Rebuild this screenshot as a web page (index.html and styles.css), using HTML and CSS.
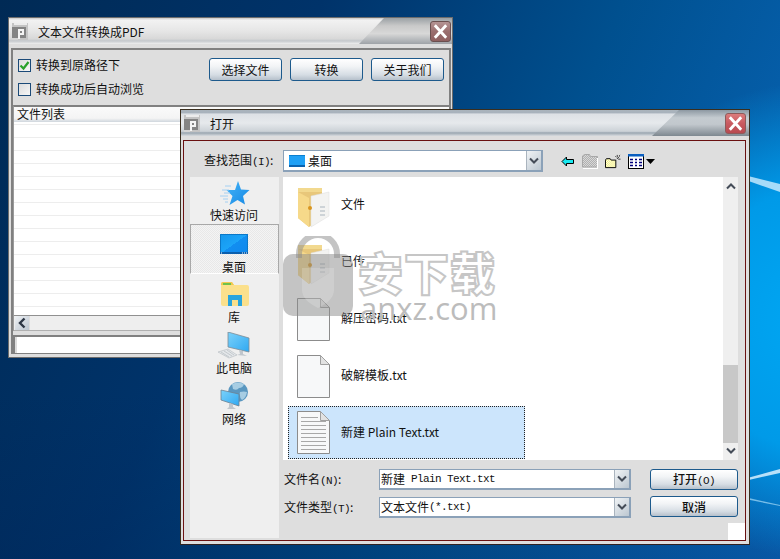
FILE: index.html
```html
<!DOCTYPE html>
<html lang="zh">
<head>
<meta charset="utf-8">
<title>文本文件转换成PDF</title>
<link rel="stylesheet" href="styles.css">
</head>
<body>
<svg class="defs" width="0" height="0">
  <symbol id="logo" viewBox="0 0 16 17">
    <rect width="16" height="17" fill="#c4c4c4"/>
    <rect x="2" y="0" width="13" height="2" fill="#ececec"/>
    <rect x="0" y="4" width="14" height="11" fill="#848484"/>
    <path d="M6 6h6v6H8v4H6z" fill="#f4f4f4"/>
    <rect x="8" y="8" width="2" height="2" fill="#848484"/>
    <rect x="0" y="15" width="6" height="2" fill="#d4d4d4"/>
  </symbol>
  <symbol id="close" viewBox="0 0 20 21">
    <path d="M4 4l12 13M16 4L4 17" stroke="#fff" stroke-width="3" fill="none"/>
  </symbol>
  <symbol id="chev" viewBox="0 0 10 8">
    <path d="M1 1.500l4 4 4-4" stroke="#444c58" stroke-width="2" fill="none"/>
  </symbol>
  <symbol id="doc" viewBox="0 0 33 43">
    <path d="M.5.500h23l9 9v33H.5z" fill="#f7f8f9" stroke="#8c8c8c"/>
    <path d="M23.500.500v9h9z" fill="#e2e2e2" stroke="#a0a0a0"/>
  </symbol>
  <symbol id="docl" viewBox="0 0 33 43">
    <path d="M.5.500h23l9 9v33H.5z" fill="#f7f8f9" stroke="#8c8c8c"/>
    <path d="M23.500.500v9h9z" fill="#e2e2e2" stroke="#a0a0a0"/>
    <path d="M4 6.500h17M4 10.500h25M4 14.500h25M4 18.500h25M4 22.500h25M4 26.500h25M4 30.500h25M4 34.500h25M4 38.500h25" stroke="#a8a8a8"/>
  </symbol>
  <symbol id="fold" viewBox="0 0 34 44">
    <path d="M1 6h24v28L12 43 1 34z" fill="#e8c77a"/>
    <path d="M1 4h24v4H1z" fill="#f2d98f"/>
    <path d="M14 12l18 -4v24l-18 11z" fill="#f3f3f1" stroke="#ddd" stroke-width=".5"/>
    <path d="M1 8l11 6v29L1 34z" fill="#f6d98a"/>
    <circle cx="13" cy="24" r="2" fill="#d9951e"/>
    <path d="M23 23h5M23 27h5M23 31h5" stroke="#a9b4bd"/>
  </symbol>
  <pattern id="dith" width="2" height="2" patternUnits="userSpaceOnUse">
    <rect width="2" height="2" fill="#f2ee66"/><rect width="1" height="1" fill="#fff"/><rect x="1" y="1" width="1" height="1" fill="#fff"/>
  </pattern>
  <pattern id="dithg" width="2" height="2" patternUnits="userSpaceOnUse">
    <rect width="2" height="2" fill="#b0b0b0"/><rect width="1" height="1" fill="#d8d8d8"/><rect x="1" y="1" width="1" height="1" fill="#d8d8d8"/>
  </pattern>
  <linearGradient id="scr" x1="0" y1="0" x2="1" y2="1"><stop offset="0" stop-color="#7cd2fa"/><stop offset="1" stop-color="#2fa8f2"/></linearGradient>
  <linearGradient id="starg" x1="0" y1="0" x2="1" y2="1"><stop offset="0" stop-color="#44b4f8"/><stop offset="1" stop-color="#1688e4"/></linearGradient>
  <linearGradient id="dg" x1="0" y1="0" x2="1" y2="1"><stop offset="0" stop-color="#1496ec"/><stop offset=".5" stop-color="#1ca4f8"/><stop offset=".5" stop-color="#128ef0"/><stop offset="1" stop-color="#0f88ee"/></linearGradient>
</svg>

<main class="desktop">
  <svg class="wall" width="780" height="559" viewBox="0 0 780 559">
    <path d="M740 174L780 184V192L740 178z" fill="#cfeeff" fill-opacity=".8"/>
    <path d="M740 480L780 469V473L740 482z" fill="#d8f0ff" fill-opacity=".85"/>
    <path d="M740 496L780 505V506L740 498z" fill="#a8dcf8" fill-opacity=".7"/>
  </svg>

  <section class="win win-main">
    <header class="titlebar">
      <svg class="logo"><use href="#logo"/></svg>
      <span class="title">文本文件转换成PDF</span>
      <button class="close close-dim"><svg width="20" height="21"><use href="#close"/></svg></button>
    </header>
    <div class="panel">
      <div class="opts">
        <div class="checks">
          <label class="check"><span class="box"><svg width="13" height="13" viewBox="0 0 13 13"><path d="M2.500 6.500l3 3 5-6.500" stroke="#2aa12a" stroke-width="2.200" fill="none"/></svg></span>转换到原路径下</label>
          <label class="check"><span class="box"></span>转换成功后自动浏览</label>
        </div>
        <div class="btns">
          <button class="btn">选择文件</button>
          <button class="btn">转换</button>
          <button class="btn">关于我们</button>
        </div>
      </div>
      <div class="listbox">
        <div class="listhead">文件列表</div>
        <div class="rows"></div>
        <div class="hscroll">
          <span class="hbtn"><svg width="8" height="12" viewBox="0 0 8 12"><path d="M6.500 1.500L2 6l4.500 4.500" stroke="#2c3644" stroke-width="2.400" fill="none"/></svg></span>
        </div>
      </div>
      <div class="status"></div>
    </div>
  </section>

  <section class="win win-dlg">
    <header class="titlebar dark">
      <svg class="logo"><use href="#logo"/></svg>
      <span class="title">打开</span>
      <button class="close"><svg width="20" height="21"><use href="#close"/></svg></button>
    </header>
    <div class="frame">
      <div class="lookrow">
        <span class="looklabel">查找范围<span class="lat">(I)</span>:</span>
        <div class="combo combo-look">
          <span class="comboval"><svg class="deskmini" width="16" height="12" viewBox="0 0 16 12"><rect width="16" height="12" fill="#1fa0f5"/><path d="M0 10h16v2H0z" fill="#0a63b0"/><path d="M0 0h16v1H0z" fill="#0a7fd0"/></svg>桌面</span>
          <span class="comboarrow"><svg width="10" height="8"><use href="#chev"/></svg></span>
        </div>
        <div class="tools">
          <svg class="tool-back" width="13" height="11" viewBox="0 0 13 11"><path d="M5.500 1L1 5.500 5.500 10V7.500h7v-4h-7z" fill="#19e8f0" stroke="#000" stroke-width="1"/></svg>
          <svg width="16" height="15" viewBox="0 0 16 15"><path d="M.500 13V2l2-1.500h5l1 2h7v10.500z" fill="url(#dithg)" stroke="#a8a8a8"/><path d="M1 14.500h15M15.500 4v11" stroke="#fff"/></svg>
          <svg width="16" height="15" viewBox="0 0 17 15"><path d="M.500 14V6l1-1.500h4l1 1.500h5v8z" fill="url(#dith)" stroke="#000"/><path d="M12.500 5l3-3M13 .500v2.500M16.500 5H14M11 2l1 1M16 .500l-1 1" stroke="#222" stroke-width=".9"/></svg>
          <span class="viewtool">
            <svg width="16" height="15" viewBox="0 0 16 15"><rect x=".5" y=".5" width="15" height="14" fill="#fff" stroke="#000"/><rect x="0" y="0" width="16" height="2.500" fill="#0b5fc0"/><path d="M2 5.500h3M7 5.500h2M11 5.500h3M2 8.500h3M7 8.500h2M11 8.500h3M2 11.500h3M7 11.500h2M11 11.500h3" stroke="#00007a" stroke-width="1.400"/></svg>
            <svg width="9" height="5" viewBox="0 0 9 5"><path d="M0 0h9L4.500 5z" fill="#000"/></svg>
          </span>
        </div>
      </div>
      <div class="mid">
        <nav class="side">
          <a class="place">
            <svg width="31" height="26" viewBox="0 0 31 26"><path d="M19 1l3 8.500 8.500.500-6.500 6 2 8.500-7.500-4.500-8 5 3-9-6-6h8.500z" fill="url(#starg)"/><path d="M6 6h6M3 10h7M5 13h6M1 16h8M4 19h5M6 22h3" stroke="#a4d0f2" stroke-width="1"/></svg>
            <span>快速访问</span>
          </a>
          <a class="place place-on">
            <svg width="28" height="20" viewBox="0 0 28 20"><rect width="28" height="20" fill="url(#dg)"/><path d="M.5 .5h27v19H.5z" fill="none" stroke="#0b78c8"/><path d="M0 18h28v2H0z" fill="#0a5fae"/><path d="M1 19h2M22 19h5" stroke="#fff" stroke-dasharray="1 1"/></svg>
            <span>桌面</span>
          </a>
          <a class="place place-lib">
            <svg width="29" height="24" viewBox="0 0 29 24"><path d="M1 2q0-2 2-2h9l2 3h13q2 0 2 2v17q0 2-2 2H3q-2 0-2-2z" fill="#fbe08c"/><path d="M1 2q0-2 2-2h9l2 3H1z" fill="#f2c94f"/><rect x="3" y="1" width="8" height="2" fill="#6fc24c"/><path d="M8 24V13h14v11h-4v-6h-6v6z" fill="#29a4dd"/></svg>
            <span>库</span>
          </a>
          <a class="place place-pc">
            <svg width="34" height="28" viewBox="0 0 34 28"><path d="M11 0l21 6v14l-21-5z" fill="url(#scr)" stroke="#7d8b96" stroke-width=".8"/><path d="M22 18l4 1v3l4 2-10-1 3-1z" fill="#c0c6cc"/><path d="M1 20l10-3 9 6-8 3z" fill="#e4e7ea" stroke="#b4bbc0" stroke-width=".6"/><path d="M4 20l8 5M7 19l8 5M10 18l7 5" stroke="#b4bbc0" stroke-width=".7"/></svg>
            <span>此电脑</span>
          </a>
          <a class="place place-net">
            <svg width="28" height="30" viewBox="0 0 28 30"><circle cx="18" cy="10" r="10" fill="#5a97c0"/><path d="M12 2q6-3 12 0-1 4-5 4-2 3-6 1zM20 10q4-1 7 0-1 6-5 8-3-3-2-8z" fill="#a7cde3"/><path d="M1 8l18 4v12L1 18z" fill="url(#scr)" stroke="#6d8090" stroke-width=".8"/><path d="M9 21l4 1v3l3 2H7l2-2z" fill="#c0c6cc"/></svg>
            <span>网络</span>
          </a>
        </nav>
        <div class="files">
          <ul class="filelist">
            <li class="file"><svg class="ficon" width="34" height="44"><use href="#fold"/></svg><span>文件</span></li>
            <li class="file"><svg class="ficon" width="34" height="44"><use href="#fold"/></svg><span>已传</span></li>
            <li class="file"><svg class="ficon" width="33" height="43"><use href="#doc"/></svg><span>解压密码.txt</span></li>
            <li class="file"><svg class="ficon" width="33" height="43"><use href="#doc"/></svg><span>破解模板.txt</span></li>
            <li class="file file-on"><svg class="ficon" width="33" height="43"><use href="#docl"/></svg><span>新建 Plain Text.txt</span></li>
          </ul>
          <div class="vscroll">
            <svg width="10" height="8" class="flip"><use href="#chev"/></svg>
            <span class="thumbtrack"><span class="thumb"></span></span>
            <svg width="10" height="8"><use href="#chev"/></svg>
          </div>
        </div>
      </div>
      <div class="foot">
        <div class="fields">
          <div class="field">
            <span class="flabel">文件名<span class="lat">(N)</span>:</span>
            <div class="combo"><span class="comboval">新建<span class="lat"> Plain Text.txt</span></span><span class="comboarrow"><svg width="10" height="8"><use href="#chev"/></svg></span></div>
          </div>
          <div class="field">
            <span class="flabel">文件类型<span class="lat">(T)</span>:</span>
            <div class="combo"><span class="comboval">文本文件<span class="lat">(*.txt)</span></span><span class="comboarrow"><svg width="10" height="8"><use href="#chev"/></svg></span></div>
          </div>
        </div>
        <div class="actions">
          <button class="btn btn-wide"><b>打开<span class="lat">(O)</span></b></button>
          <button class="btn btn-wide"><b>取消</b></button>
        </div>
      </div>
      <span class="grip"></span>
    </div>
  </section>

  <div class="mark">
    <div class="badge">
      <svg width="70" height="82" viewBox="0 0 70 82"><path d="M16 22V18a19 19 0 0 1 38 0v4" fill="none" stroke="#8a8a8a" stroke-opacity=".5" stroke-width="6"/><rect x="0" y="18" width="70" height="62" rx="10" fill="#8a8a8a" fill-opacity=".5"/><path d="M19 32h32v22q0 10-16 18-16-8-16-18z" fill="#fff" fill-opacity=".18"/></svg>
    </div>
    <div class="marktext">
      <span class="mark-cn">安下载</span>
      <span class="mark-en">anxz.com</span>
    </div>
  </div>
</main>
</body>
</html>
```
FILE: styles.css
```css
* { box-sizing: border-box; }
html, body { margin: 0; padding: 0; }
body { width: 780px; height: 559px; overflow: hidden; font: 12px/1 "Noto Sans CJK SC", "Liberation Sans", sans-serif; color: #111; }
.defs { position: absolute; }
.lat { font-family: "Liberation Mono", monospace; font-size: 11px; letter-spacing: -.6px; white-space: pre; }
button { font: inherit; color: inherit; padding: 0; }

.desktop {
  position: relative; width: 780px; height: 559px; overflow: hidden;
  background:
    radial-gradient(ellipse 260px 240px at 830px 320px, #00a8f4 0, #009ae8 55%, rgba(0,110,200,0) 100%),
    linear-gradient(180deg, rgba(0,0,0,0) 70%, rgba(0,30,80,.25) 100%),
    linear-gradient(112deg, #002a55 0, #00336a 32%, #00508f 62%, #0a6ac0 100%);
}
.wall { position: absolute; left: 0; top: 0; }

.win { position: absolute; display: flex; flex-direction: column; background: #dedede; }
.win-main { left: 8px; top: 17px; width: 445px; height: 341px; border: 1px solid #6c6c6c; padding: 0 1px 3px 2px; }
.win-dlg { left: 180px; top: 109px; width: 570px; height: 436px; border: 1px solid #3a2e1e; border-bottom-color: #302020; }

.titlebar {
  position: relative; flex: none; height: 26px; display: flex; align-items: center; padding-left: 3px;
  background: linear-gradient(#9aa0a4 0, #c9c9c9 30%, #d8d8d8 60%, #9ea3a8 100%);
  margin: 0 -1px 0 -2px;
}
.titlebar::before {
  content: ""; position: absolute; inset: 0;
  background: linear-gradient(#c8c8c8 0, #f2f2f2 8%, #e6e6e6 50%, #d8d8d8 80%, #c4c8cc 88%, #eeeeee 100%);
  clip-path: polygon(0 0, 375px 0, 350px 100%, 0 100%);
}
.titlebar.dark { margin: 0; background: linear-gradient(#8d98a2 0, #c4cbd0 30%, #c2c8cd 55%, #7e8890 100%); }
.titlebar.dark::before {
  background: linear-gradient(#aab4bc 0, #a8b2bc 10%, #dde1e5 16%, #e6e9ec 50%, #ccd2d7 82%, #9aa6b0 88%, #d8dcdf 100%);
  clip-path: polygon(0 0, 498px 0, 471px 100%, 0 100%);
}
.logo { position: relative; flex: none; width: 16px; height: 17px; }
.title { position: relative; margin-left: 10px; font-size: 12px; padding-top: 1px; }
.close {
  position: absolute; right: 1px; top: 3px; width: 21px; height: 21px; border: 1px solid #8e5a5a; border-radius: 3px;
  background: linear-gradient(#dc7c7c, #c85a60 50%, #b84a50);
  display: flex; align-items: center; justify-content: center;
}
.dark .close { right: 3px; }
.close-dim { background: linear-gradient(#b49494, #9a6e6e 50%, #8e6060); border-color: #6a5050; }

.panel { flex: 1; min-height: 0; margin-top: 4px; border: 2px solid #808080; border-bottom-width: 0; display: flex; flex-direction: column; padding-top: 8px; }
.opts { flex: none; display: flex; justify-content: space-between; padding: 0 5px 0 5px; height: 47px; }
.checks { display: flex; flex-direction: column; gap: 10px; }
.check { display: flex; align-items: center; gap: 5px; height: 14px; }
.box { width: 13px; height: 13px; border: 1px solid #1b4a78; background: linear-gradient(135deg, #dcdcdc, #f6f6f6); display: block; }
.box svg { display: block; margin: -1px; }
.btns { display: flex; gap: 8px; }
.btn {
  width: 73px; height: 23px; border: 1px solid #1d5a8c; border-radius: 3px;
  background: linear-gradient(#ffffff 0, #f2f4f6 35%, #d6dde4 75%, #b6c0cb 100%);
  text-align: center;
}
.listbox { flex: 1; min-height: 0; display: flex; flex-direction: column; background: #fff; border-top: 2px solid #808080; border-left: 1px solid #9a9a9a; }
.listhead { flex: none; height: 15px; padding: 0 0 0 3px; line-height: 14px; background: linear-gradient(#fafafa, #f4f4f4 75%, #cfd6dd 100%); }
.rows { flex: 1; min-height: 0; background: linear-gradient(#fff 0 12px, #ededed 12px 13px) 0 3px / 100% 13px; }
.hscroll { flex: none; height: 16px; background: #eeeeee; border-top: 1px solid #909090; border-bottom: 1px solid #b0b0b0; }
.hbtn { display: flex; align-items: center; justify-content: center; width: 15px; height: 14px; background: linear-gradient(135deg, #eef1f4, #bcc6d0); border-right: 1px solid #ddd; margin-left: 1px; }
.status { flex: none; height: 19px; margin-top: 4px; background: #fff; border-top: 2px solid #808080; border-left: 2px solid #808080; border-bottom: 1px solid #808080; box-shadow: inset 2px 0 #ddd; }

.frame { position: relative; flex: 1; min-height: 0; margin: 4px 3px 3px 2px; border: 1px solid #6a1010; display: flex; flex-direction: column; padding: 8px 7px 0 6px; }
.lookrow { flex: none; height: 24px; display: flex; align-items: center; }
.looklabel { width: 93px; padding-left: 14px; white-space: nowrap; }
.combo { display: flex; align-items: stretch; flex: 1; height: 22px; border: 2px solid #8ba1b8; border-width: 1px 2px 2px 1px; background: #fff; }
.combo-look { flex: none; width: 260px; }
.comboval { flex: 1; display: flex; align-items: center; padding-left: 1px; }
.combo-look .comboval { padding-left: 5px; }
.deskmini { margin-right: 3px; flex: none; }
.comboarrow { width: 15px; display: flex; align-items: center; justify-content: center; background: linear-gradient(135deg, #f0f3f5, #bcc7d1); border-left: 1px solid #aab4be; }
.tools { display: flex; align-items: center; margin-left: 18px; gap: 7px; }
.tool-back { margin-right: 1px; }
.viewtool { display: flex; align-items: center; gap: 2px; }

.mid { flex: 1; min-height: 0; margin-top: 4px; display: flex; gap: 4px; }
.side { width: 89px; flex: none; height: 361px; background: #efefef; display: flex; flex-direction: column; align-items: center; padding-top: 3px; }
.place { width: 100%; display: flex; flex-direction: column; align-items: center; height: 44px; padding-right: 1px; }
.place span { margin-top: 3px; }
.place svg { flex: none; }
.place-on {
  height: 50px; padding-top: 9px;
  border: 1px solid #a8a8a8; border-bottom-color: #fff;
  background: repeating-conic-gradient(#f4f4f4 0 25%, #e8e8e8 0 50%) 0 0 / 2px 2px;
}
.place-on span { margin-top: 7px; }
.place-lib { height: 50px; padding-top: 8px; }
.place-lib span { margin-top: 5px; }
.place-pc { height: 50px; padding-top: 8px; }
.place-pc span { margin-top: 2px; }
.place-net { height: 50px; padding-top: 8px; }
.place-net span { margin-top: 1px; }

.files { flex: none; width: 455px; height: 283px; background: #fff; display: flex; }
.filelist { flex: 1; list-style: none; margin: 0; padding: 0; }
.file { position: relative; height: 57px; display: flex; align-items: center; padding-left: 14px; }
.file span { position: absolute; left: 58px; top: 21px; }
.ficon { display: block; flex: none; }
.file-on { margin: 1px 0 0 5px; width: 237px; height: 53px; padding-left: 9px; background: #cce5fc; outline: 1px dotted #222; outline-offset: -1px; }
.file-on span { left: 53px; top: 20px; }
.vscroll { width: 15px; flex: none; background: #efefef; display: flex; flex-direction: column; align-items: center; padding: 5px 0; }
.flip { transform: scaleY(-1); flex: none; }
.vscroll > svg { flex: none; }
.thumbtrack { flex: 1; width: 100%; display: flex; flex-direction: column; justify-content: flex-end; padding-bottom: 4px; }
.thumb { display: block; height: 78px; background: #c8c8c8; width: 100%; }

.foot { position: absolute; left: 100px; right: 7px; top: 328px; display: flex; gap: 19px; }
.fields { width: 347px; display: flex; flex-direction: column; gap: 7px; }
.field { display: flex; align-items: center; height: 21px; }
.flabel { width: 95px; white-space: nowrap; }
.field .combo { height: 21px; }
.actions { display: flex; flex-direction: column; gap: 6px; }
.btn-wide { width: 88px; height: 21px; }
.btn-wide b { font-weight: 500; }
.grip { position: absolute; right: 0; bottom: 0; width: 17px; height: 17px; background: #fff; }

.mark { position: absolute; left: 283px; top: 236px; display: flex; pointer-events: none; }
.badge svg { display: block; }
.marktext { margin-left: 5px; display: flex; flex-direction: column; width: 150px; }
.mark-cn { font: 900 45px/1 "Noto Sans CJK SC", sans-serif; color: transparent; -webkit-text-stroke: 2px #c6c6c6; white-space: nowrap; margin-top: 13px; letter-spacing: 1px; }
.mark-en { font: 500 31px/24px "Open Sans", sans-serif; color: #bcbcbc; white-space: nowrap; margin-top: 2px; margin-left: 2px; }
```
